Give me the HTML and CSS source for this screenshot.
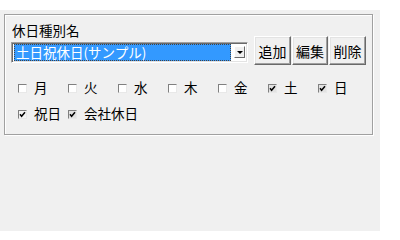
FILE: index.html
```html
<!DOCTYPE html>
<html lang="ja">
<head>
<meta charset="utf-8">
<link rel="stylesheet" href="styles.css">
</head>
<body>
<div class="panel">
  <div class="group">
    <div class="caption">休日種別名</div>
    <div class="combo-row">
      <div class="combo">
        <span class="sel">土日祝休日(サンプル)</span>
        <span class="drop"><span class="arrow"></span></span>
      </div>
      <div class="buttons">
        <button class="btn btn-a">追加</button>
        <button class="btn btn-b">編集</button>
        <button class="btn btn-a">削除</button>
      </div>
    </div>
    <div class="checks days">
      <label class="chk"><span class="box"></span><span class="txt">月</span></label>
      <label class="chk"><span class="box"></span><span class="txt">火</span></label>
      <label class="chk"><span class="box"></span><span class="txt">水</span></label>
      <label class="chk"><span class="box"></span><span class="txt">木</span></label>
      <label class="chk"><span class="box"></span><span class="txt">金</span></label>
      <label class="chk"><span class="box on"><svg viewBox="0 0 9 9"><polyline points="2,4.2 3.6,6.2 7,2.2"/></svg></span><span class="txt">土</span></label>
      <label class="chk"><span class="box on"><svg viewBox="0 0 9 9"><polyline points="2,4.2 3.6,6.2 7,2.2"/></svg></span><span class="txt">日</span></label>
    </div>
    <div class="checks extras">
      <label class="chk"><span class="box on light"><svg viewBox="0 0 9 9"><polyline points="2,4.2 3.6,6.2 7,2.2"/></svg></span><span class="txt">祝日</span></label>
      <label class="chk"><span class="box on"><svg viewBox="0 0 9 9"><polyline points="2,4.2 3.6,6.2 7,2.2"/></svg></span><span class="txt">会社休日</span></label>
    </div>
  </div>
</div>
</body>
</html>
```

FILE: styles.css
```css
html, body {
  margin: 0;
  padding: 0;
  background: #ffffff;
}
body {
  font-family: "Noto Sans CJK JP", "Noto Sans", sans-serif;
  font-size: 13.5px;
  color: #000;
}
.panel {
  margin-top: 10px;
  width: 380px;
  height: 221px;
  box-sizing: border-box;
  background: #f0f0f0;
  padding: 4px 0 0 4px;
}
.group {
  width: 369px;
  height: 121px;
  box-sizing: border-box;
  border: 1px solid #a0a0a0;
  box-shadow: inset 1px 1px 0 #fff, 1px 1px 0 #fff;
  padding: 10px 0 0 6px;
}
.caption {
  line-height: 11px;
  height: 11px;
  white-space: nowrap;
  padding-left: 1px;
}
.combo-row {
  display: flex;
  align-items: center;
  height: 29px;
}
.combo {
  width: 237px;
  height: 21px;
  box-sizing: border-box;
  border-top: 1px solid #a0a0a0;
  border-left: 1px solid #a0a0a0;
  border-right: 1px solid #fff;
  border-bottom: 1px solid #fff;
  box-shadow: inset 1px 1px 0 #696969, inset -1px -1px 0 #e3e3e3;
  background: #fff;
  display: flex;
  align-items: center;
  padding: 1px 2px 1px 2px;
  margin-top: 3px;
}
.sel {
  flex: 1;
  height: 17px;
  line-height: 17px;
  background: #3399ff;
  color: #fff;
  outline: 1px dotted #444;
  outline-offset: -1px;
  padding-left: 2px;
  white-space: nowrap;
}
.drop {
  flex-shrink: 0;
  width: 11px;
  height: 12px;
  box-sizing: border-box;
  margin-left: 3px;
  background: #f0f0f0;
  border-top: 1px solid #fff;
  border-left: 1px solid #fff;
  border-right: 1px solid #696969;
  border-bottom: 1px solid #696969;
  display: flex;
  align-items: center;
  justify-content: center;
}
.arrow {
  width: 0;
  height: 0;
  border-left: 3px solid transparent;
  border-right: 3px solid transparent;
  border-top: 3px solid #000;
}
.buttons {
  display: flex;
  gap: 1px;
  margin-left: 6px;
}
.btn {
  font-family: inherit;
  font-size: 14px;
  color: #000;
  height: 29px;
  padding: 0;
  margin: 0;
  background: #f0f0f0;
  border-top: 1px solid #fff;
  border-left: 1px solid #fff;
  border-right: 1px solid #696969;
  border-bottom: 1px solid #696969;
  box-shadow: inset -1px -1px 0 #a0a0a0, inset 1px 1px 0 #e3e3e3;
}
.btn-a { width: 37px; }
.btn-b { width: 36px; }
.checks {
  display: grid;
  grid-template-columns: repeat(7, 50px);
  margin-left: 7px;
  height: 16px;
}
.days { margin-top: 14px; }
.extras { margin-top: 10px; }
.chk {
  display: flex;
  align-items: center;
  gap: 7px;
  height: 16px;
  white-space: nowrap;
}
.box {
  flex-shrink: 0;
  width: 9px;
  height: 9px;
  box-sizing: border-box;
  background: #fff;
  border-top: 1px solid #808080;
  border-left: 1px solid #808080;
  border-right: 1px solid #e8e8e8;
  border-bottom: 1px solid #e8e8e8;
  margin-top: 2px;
  position: relative;
}
.box.on { background: #e2e2e2; }
.box.light { background: #f4f4f4; }
.box svg {
  position: absolute;
  left: -1px;
  top: -1px;
  width: 9px;
  height: 9px;
}
.box svg polyline {
  fill: none;
  stroke: #000;
  stroke-width: 1.5;
}
.txt { line-height: 16px; }
```
